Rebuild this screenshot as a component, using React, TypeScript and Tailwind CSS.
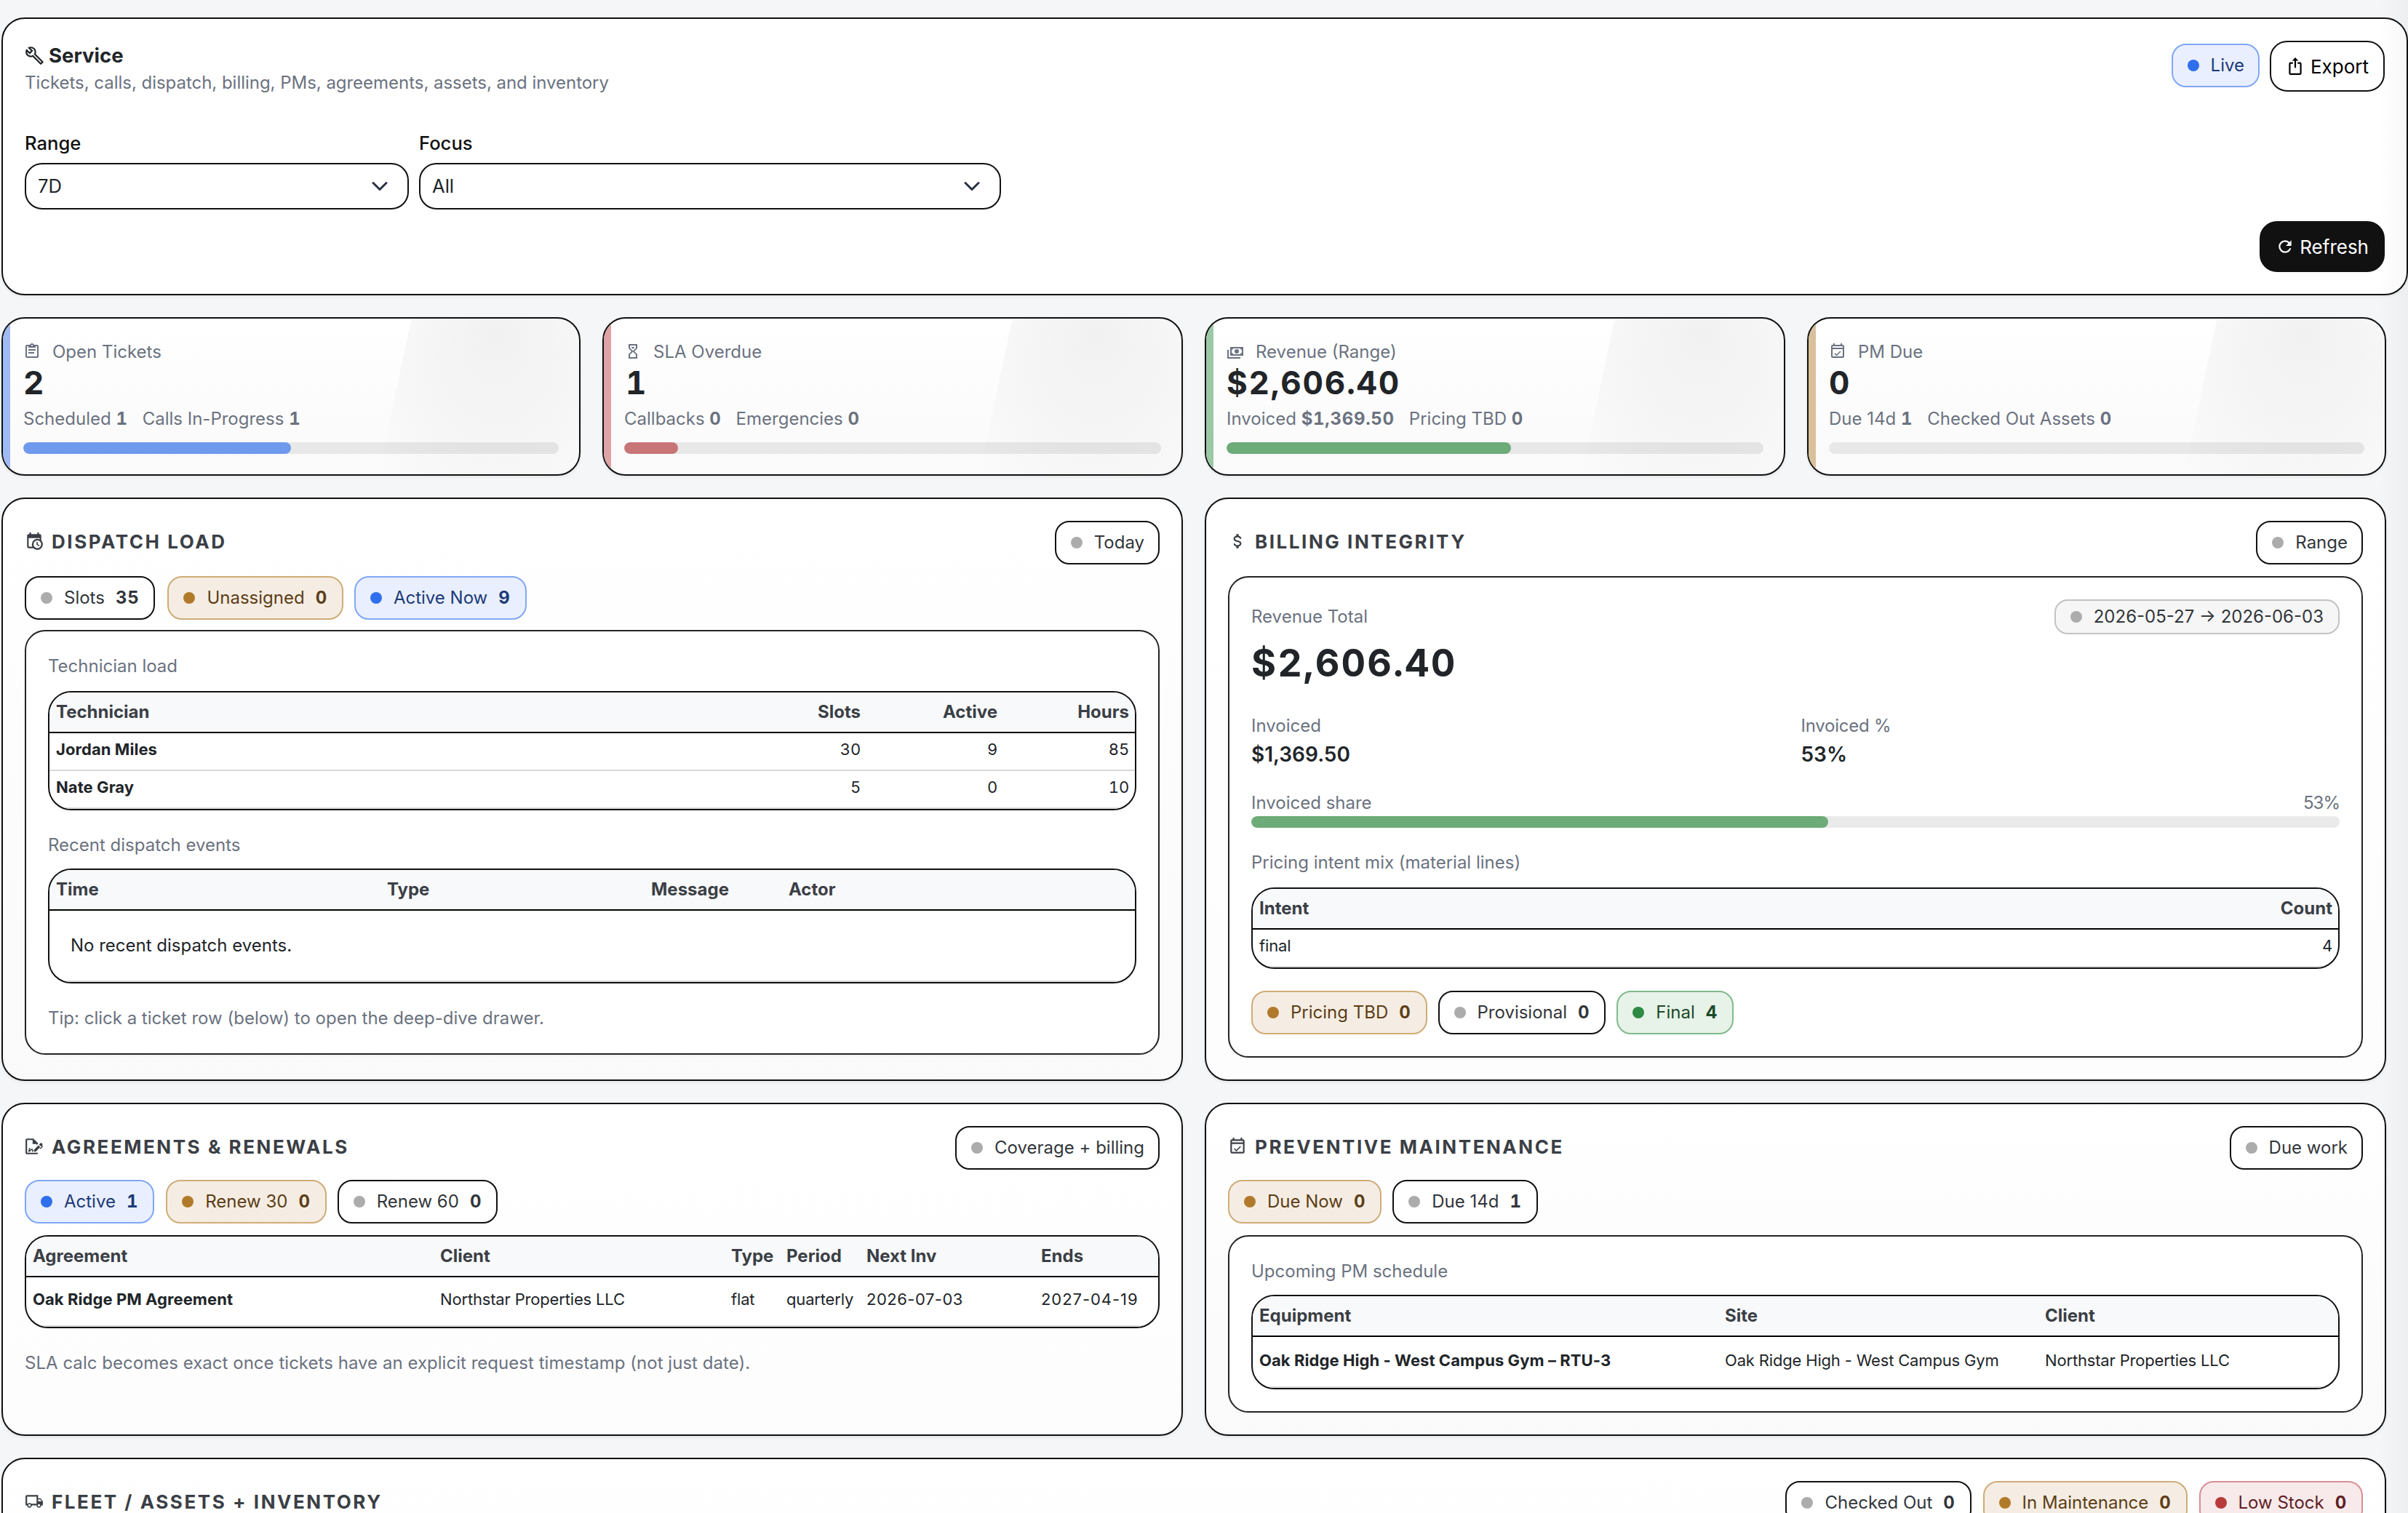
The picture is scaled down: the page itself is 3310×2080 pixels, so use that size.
import React from 'react';
import { clsx } from 'clsx';

const ICONS = {
  wrench:
    'M22.61,19L13.53,9.91C14.46,7.57 14,4.81 12.09,2.91C9.79,0.61 6.21,0.4 3.66,2.26L7.5,6.11L6.08,7.52L2.25,3.69C0.39,6.23 0.6,9.82 2.9,12.11C4.76,13.97 7.47,14.46 9.79,13.59L18.9,22.7C19.29,23.09 19.92,23.09 20.31,22.7L22.61,20.4C23,20 23,19.39 22.61,19M19.61,20.59L10.15,11.13C9.54,11.58 8.86,11.85 8.15,11.95C6.79,12.15 5.36,11.74 4.32,10.7C3.37,9.76 2.93,8.5 3,7.26L6.09,10.35L10.33,6.11L7.24,3C8.48,2.95 9.73,3.39 10.68,4.33C11.76,5.41 12.17,6.9 11.92,8.29C11.8,9 11.5,9.66 11.04,10.25L20.5,19.7L19.61,20.59Z',
  exportUp:
    'M12,1L8,5H11V14H13V5H16M18,23H6C4.89,23 4,22.1 4,21V9A2,2 0 0,1 6,7H9V9H6V21H18V9H15V7H18A2,2 0 0,1 20,9V21A2,2 0 0,1 18,23Z',
  refresh:
    'M17.65,6.35C16.2,4.9 14.21,4 12,4A8,8 0 0,0 4,12A8,8 0 0,0 12,20C15.73,20 18.84,17.45 19.73,14H17.65C16.83,16.33 14.61,18 12,18A6,6 0 0,1 6,12A6,6 0 0,1 12,6C13.66,6 15.14,6.69 16.22,7.78L13,11H20V4L17.65,6.35Z',
  clipboard:
    'M19,3H14.82C14.4,1.84 13.3,1 12,1C10.7,1 9.6,1.84 9.18,3H5A2,2 0 0,0 3,5V19A2,2 0 0,0 5,21H19A2,2 0 0,0 21,19V5A2,2 0 0,0 19,3M12,3A1,1 0 0,1 13,4A1,1 0 0,1 12,5A1,1 0 0,1 11,4A1,1 0 0,1 12,3M7,7H17V5H19V19H5V5H7V7M17,11H7V9H17V11M15,15H7V13H15V15Z',
  sand:
    'M6,2H18V8H18V8L14,12L18,16V16H18V22H6V16H6V16L10,12L6,8V8H6V2M16,16.5L12,12.5L8,16.5V20H16V16.5M12,11.5L16,7.5V4H8V7.5L12,11.5M10,6H14V6.75L12,8.75L10,6.75V6Z',
  cash: 'M5,6H23V18H5V6M14,9A3,3 0 0,1 17,12A3,3 0 0,1 14,15A3,3 0 0,1 11,12A3,3 0 0,1 14,9M9,8A2,2 0 0,1 7,10V14A2,2 0 0,1 9,16H19A2,2 0 0,1 21,14V10A2,2 0 0,1 19,8H9M1,10H3V20H19V22H1V10Z',
  calendarCheck:
    'M19 3H18V1H16V3H8V1H6V3H5C3.9 3 3 3.9 3 5V19C3 20.11 3.9 21 5 21H19C20.11 21 21 20.11 21 19V5C21 3.9 20.11 3 19 3M19 19H5V9H19V19M19 7H5V5H19V7M10.56 18.46L16.5 12.53L15.43 11.47L10.56 16.34L8.45 14.23L7.39 15.29L10.56 18.46Z',
  calendarClock:
    'M15,13H16.5V15.82L18.94,17.23L18.19,18.53L15,16.69V13M19,8H5V19H9.67C9.24,18.09 9,17.07 9,16A7,7 0 0,1 16,9C17.07,9 18.09,9.24 19,9.67V8M5,21C3.89,21 3,20.1 3,19V5C3,3.89 3.89,3 5,3H6V1H8V3H16V1H18V3H19A2,2 0 0,1 21,5V11.1C22.24,12.36 23,14.09 23,16A7,7 0 0,1 16,23C14.09,23 12.36,22.24 11.1,21H5M16,11.15A4.85,4.85 0 0,0 11.15,16C11.15,18.68 13.32,20.85 16,20.85A4.85,4.85 0 0,0 20.85,16C20.85,13.32 18.68,11.15 16,11.15Z',
  dollar:
    'M7,15H9C9,16.08 10.37,17 12,17C13.63,17 15,16.08 15,15C15,13.9 13.96,13.5 11.76,12.97C9.64,12.44 7,11.78 7,9C7,7.21 8.47,5.69 10.5,5.18V3H13.5V5.18C15.53,5.69 17,7.21 17,9H15C15,7.92 13.63,7 12,7C10.37,7 9,7.92 9,9C9,10.1 10.04,10.5 12.24,11.03C14.36,11.56 17,12.22 17,15C17,16.79 15.53,18.31 13.5,18.82V21H10.5V18.82C8.47,18.31 7,16.79 7,15Z',
  fileSign:
    'M19.7 12.9L14 18.6H11.7V16.3L17.4 10.6L19.7 12.9M23.1 12.1C23.1 12.4 22.8 12.7 22.5 13L20 15.5L19.1 14.6L21.7 12L21.1 11.4L20.4 12.1L18.1 9.8L20.3 7.7C20.5 7.5 20.9 7.5 21.2 7.7L22.6 9.1C22.8 9.3 22.8 9.7 22.6 10C22.4 10.2 22.2 10.4 22.2 10.6C22.2 10.8 22.4 11 22.6 11.2C22.9 11.5 23.2 11.8 23.1 12.1M3 20V4H10V9H15V10.5L17 8.5V8L11 2H3C1.9 2 1 2.9 1 4V20C1 21.1 1.9 22 3 22H15C16.1 22 17 21.1 17 20H3M11 17.1C10.8 17.1 10.6 17.2 10.5 17.2L10 15H8.5L6.4 16.7L7 14H5.5L4.5 19H6L8.9 16.4L9.5 18.7H10.5L11 18.6V17.1Z',
  truck:
    'M18 18.5C18.83 18.5 19.5 17.83 19.5 17C19.5 16.17 18.83 15.5 18 15.5C17.17 15.5 16.5 16.17 16.5 17C16.5 17.83 17.17 18.5 18 18.5M19.5 9.5H17V12H21.46L19.5 9.5M6 18.5C6.83 18.5 7.5 17.83 7.5 17C7.5 16.17 6.83 15.5 6 15.5C5.17 15.5 4.5 16.17 4.5 17C4.5 17.83 5.17 18.5 6 18.5M20 8L23 12V17H21C21 18.66 19.66 20 18 20C16.34 20 15 18.66 15 17H9C9 18.66 7.66 20 6 20C4.34 20 3 18.66 3 17H1V6C1 4.89 1.89 4 3 4H17V8H20M3 6V15H3.76C4.31 14.39 5.11 14 6 14C6.89 14 7.69 14.39 8.24 15H15V6H3Z',
};
type IconName = keyof typeof ICONS;

function Icon({ name, className }: { name: IconName; className?: string }) {
  return (
    <svg viewBox="0 0 24 24" fill="currentColor" className={clsx('shrink-0', className)}>
      <path d={ICONS[name]} />
    </svg>
  );
}

type Tone = 'plain' | 'blue' | 'amber' | 'green' | 'red';

const PILL: Record<Tone, string> = {
  plain: 'border-[#111111] bg-white text-[#32363b]',
  blue: 'border-[#80a7f5] bg-[#e9effe] text-[#1c3a78]',
  amber: 'border-[#cfac78] bg-[#f5ede3] text-[#5c3d16]',
  green: 'border-[#7fba8b] bg-[#e7f2e9] text-[#1b4a27]',
  red: 'border-[#d98f92] bg-[#f8eaeb] text-[#5e1f23]',
};
const DOT: Record<Tone, string> = {
  plain: 'bg-[#acacac]',
  blue: 'bg-[#2f6fed]',
  amber: 'bg-[#b17a2b]',
  green: 'bg-[#2c8a42]',
  red: 'bg-[#b83a3a]',
};

function Pill({ tone = 'plain', label, count, className }: { tone?: Tone; label: string; count?: string; className?: string }) {
  return (
    <span
      className={clsx(
        'inline-flex h-[60px] shrink-0 items-center gap-4 whitespace-nowrap rounded-[20px] border-2 px-5 text-[24px] leading-9',
        PILL[tone],
        className,
      )}
    >
      <span className={clsx('size-4 rounded-full', DOT[tone])} />
      <span className="-mr-px">{label}</span>
      {count !== undefined && <b className="font-bold tracking-[0.03em] tabular-nums">{count}</b>}
    </span>
  );
}

function Select({ value, className }: { value: string; className?: string }) {
  return (
    <div
      className={clsx(
        'flex h-16 items-center justify-between rounded-[24px] border-2 border-[#111111] bg-white pl-4 pr-[26px] text-[25.6px] text-[#212529]',
        className,
      )}
    >
      <span>{value}</span>
      <svg viewBox="0 0 16 16" className="size-6 text-[#2b3445]" fill="none" stroke="currentColor" strokeWidth="2" strokeLinecap="round" strokeLinejoin="round">
        <path d="m2 5 6 6 6-6" />
      </svg>
    </div>
  );
}

interface KpiProps {
  icon: IconName;
  label: string;
  value: string;
  stats: [string, string][];
  pct: number;
  stripe: string;
  fill: string;
  valueClass?: string;
}

function Kpi({ icon, label, value, stats, pct, stripe, fill, valueClass }: KpiProps) {
  return (
    <section className="relative h-[218px] overflow-hidden rounded-[32px] border-2 border-[#111111] bg-linear-to-b from-white to-[#fafafa] p-7 shadow-[0_2px_4px_rgba(0,0,0,0.07)]">
      <div className={clsx('absolute inset-y-0 left-0 w-2.5', stripe)} />
      <div className="absolute -top-[99px] left-[534px] h-[500px] w-[400px] rotate-12 bg-[radial-gradient(circle_at_118px_130px,rgba(17,17,17,0.06),rgba(17,17,17,0)_250px)]" />
      <div className="relative text-[24px] leading-9 text-[#6b7280]">
        <div className="flex items-center gap-4">
          <Icon name={icon} className="-mt-0.5 size-6" />
          <span>{label}</span>
        </div>
        <div className={clsx('h-[49px] text-[44px] leading-[49px] font-bold tracking-[0.04em] text-[#212529] tabular-nums', valueClass)}>{value}</div>
        <div className="mt-[7px] flex gap-5">
          {stats.map(([name, n]) => (
            <span key={name}>
              {name} <b className="font-bold tracking-[0.03em] tabular-nums">{n}</b>
            </span>
          ))}
        </div>
        <div className="mt-3.5 h-4 overflow-hidden rounded-full bg-[#111111]/8">
          <div className={clsx('h-full rounded-full', fill)} style={{ width: `${pct}%` }} />
        </div>
      </div>
    </section>
  );
}

interface PanelProps {
  icon: IconName;
  title: string;
  actions: React.ReactNode;
  className?: string;
  children?: React.ReactNode;
}

function Panel({ icon, title, actions, className = 'to-[#fafafa]', children }: PanelProps) {
  return (
    <section
      className={clsx(
        'rounded-[32px] border-2 border-[#111111] bg-linear-to-b from-white p-[30px] shadow-[0_2px_4px_rgba(0,0,0,0.07)]',
        className,
      )}
    >
      <header className="flex items-center justify-between">
        <h2 className="-mt-[3px] flex items-center gap-[11px] text-[26px] leading-10 font-bold tracking-[0.098em] text-[#3b3f45] uppercase">
          <Icon name={icon} className="-mt-0.5 size-[26px]" />
          {title}
        </h2>
        <div className="flex gap-4">{actions}</div>
      </header>
      {children}
    </section>
  );
}

function Inset({ className, children }: { className?: string; children: React.ReactNode }) {
  return (
    <div className={clsx('rounded-[28px] border-2 border-[#242424] bg-white p-[30px] text-[24px] leading-9 text-[#6b7280] shadow-[0_2px_2px_rgba(0,0,0,0.04)]', className)}>
      {children}
    </div>
  );
}

interface GridTableProps {
  cols: string;
  head: string[];
  rows?: string[][];
  right?: number[];
  rowClass?: string;
  className?: string;
  boldFirst?: boolean;
  empty?: string;
}

function cellTracking(text: string) {
  if (!/^\d{4}-\d\d-\d\d$/.test(text)) return 'tracking-[-0.17px]';
  return text.includes('1') ? 'tracking-[0.95px]' : 'tracking-[0.5px]';
}

function GridTable({ cols, head, rows = [], right = [], rowClass = 'h-[52px] pb-1.5', className, boldFirst = true, empty }: GridTableProps) {
  return (
    <div className={clsx('overflow-hidden rounded-[32px] border-2 border-[#111111] bg-white text-[#212529]', className)}>
      <div className={clsx('grid h-14 items-center border-b-2 border-black bg-[#f8f9fb] pb-px text-[24px] font-bold text-[#3b3f45]', cols)}>
        {head.map((h, i) => (
          <span key={h} className={clsx('pr-2 pl-[9px] whitespace-nowrap', right.includes(i) && 'text-right')}>
            {h}
          </span>
        ))}
      </div>
      {rows.map((r) => (
        <div key={r[0]} className={clsx('grid items-center border-b-2 border-[#d9d9d9] text-[22px]', cols, rowClass)}>
          {r.map((c, i) => (
            <span
              key={i}
              className={clsx(
                'pr-2 pl-[9px] whitespace-nowrap',
                right.includes(i) && 'text-right tabular-nums',
                i === 0 && boldFirst ? 'font-bold tracking-[0.07px]' : cellTracking(c),
              )}
            >
              {c}
            </span>
          ))}
        </div>
      ))}
      {empty && <div className="border-b-2 border-[#d9d9d9] px-[29px] py-[30px] text-[24px] leading-9">{empty}</div>}
    </div>
  );
}

export default function App() {
  return (
    <div className="relative h-screen overflow-hidden bg-[#f4f6f8] pt-6 pl-0.5 font-['Inter',sans-serif] text-[#212529]">
      <section className="h-[382px] rounded-[32px] border-2 border-[#111111] bg-white p-[30px] shadow-[0_2px_4px_rgba(0,0,0,0.07)]">
        <div className="flex h-[122px] items-start justify-between">
          <div>
            <h1 className="-mb-px flex h-[41px] items-center gap-1.5 text-[27.5px] font-bold">
              <Icon name="wrench" className="size-[27px]" />
              Service
            </h1>
            <p className="text-[24px] leading-9 tracking-[-0.03px] text-[#6b7280]">Tickets, calls, dispatch, billing, PMs, agreements, assets, and inventory</p>
          </div>
          <div className="flex items-start gap-3.5">
            <Pill tone="blue" label="Live" className="mt-1" />
            <button className="flex h-[70px] items-center gap-2 rounded-[24px] border-2 border-[#111111] bg-white px-5 text-[26px] text-black">
              <Icon name="exportUp" className="size-[26px]" />
              Export
            </button>
          </div>
        </div>
        <div className="flex gap-3.5">
          <label className="flex w-[528px] flex-col text-[25.6px] font-medium text-[#111111]">
            <span className="h-[46px] leading-[38px]">Range</span>
            <Select value="7D" className="font-normal" />
          </label>
          <label className="flex w-[800px] flex-col text-[25.6px] font-medium text-[#111111]">
            <span className="h-[46px] leading-[38px]">Focus</span>
            <Select value="All" className="font-normal" />
          </label>
        </div>
        <div className="mt-4 flex justify-end">
          <button className="flex h-[70px] items-center gap-[7px] rounded-[24px] border-2 border-[#111111] bg-[#111111] px-5 text-[26px] text-white">
            <Icon name="refresh" className="size-[26px]" />
            Refresh
          </button>
        </div>
      </section>

      <main className="mt-[30px] flex w-[3278px] flex-col gap-[30px]">
        <div className="grid grid-cols-[796px_798px_798px_796px] gap-[30px]">
          <Kpi icon="clipboard" label="Open Tickets" value="2" stats={[['Scheduled', '1'], ['Calls In-Progress', '1']]} pct={50} stripe="bg-[#9fbaf4]" fill="bg-[#6f99ec]" />
          <Kpi icon="sand" label="SLA Overdue" value="1" valueClass="pl-0.5" stats={[['Callbacks', '0'], ['Emergencies', '0']]} pct={10} stripe="bg-[#dfa2a5]" fill="bg-[#c87578]" />
          <Kpi icon="cash" label="Revenue (Range)" value="$2,606.40" stats={[['Invoiced', '$1,369.50'], ['Pricing TBD', '0']]} pct={53} stripe="bg-[#9bc9a5]" fill="bg-[#6dab79]" />
          <Kpi icon="calendarCheck" label="PM Due" value="0" stats={[['Due 14d', '1'], ['Checked Out Assets', '0']]} pct={0} stripe="bg-[#d9c09a]" fill="bg-[#b17a2b]" />
        </div>

        <div className="grid h-[802px] grid-cols-2 gap-[30px]">
          <Panel icon="calendarClock" title="Dispatch Load" actions={<Pill label="Today" />}>
            <div className="mt-4 flex gap-[15px]">
              <Pill label="Slots" count="35" className="mr-0.5" />
              <Pill tone="amber" label="Unassigned" count="0" />
              <Pill tone="blue" label="Active Now" count="9" />
            </div>
            <Inset className="mt-3.5">
              <div>Technician load</div>
              <GridTable
                className="mt-4"
                cols="grid-cols-[935px_188px_188px_181px]"
                head={['Technician', 'Slots', 'Active', 'Hours']}
                right={[1, 2, 3]}
                rows={[
                  ['Jordan Miles', '30', '9', '85'],
                  ['Nate Gray', '5', '0', '10'],
                ]}
              />
              <div className="mt-[30px]">Recent dispatch events</div>
              <GridTable className="mt-3.5" cols="grid-cols-[455px_363px_189px_1fr]" head={['Time', 'Type', 'Message', 'Actor']} empty="No recent dispatch events." />
              <div className="mt-[30px]">Tip: click a ticket row (below) to open the deep-dive drawer.</div>
            </Inset>
          </Panel>

          <Panel icon="dollar" title="Billing Integrity" className="to-[#fdfdfd]" actions={<Pill label="Range" />}>
            <Inset className="mt-4">
              <div className="flex h-12 items-center justify-between">
                <span>Revenue Total</span>
                <span className="flex h-12 items-center gap-4 rounded-[18px] border-2 border-[#c3c3c3] bg-[#f6f6f6] px-5 text-[#32363b]">
                  <span className="size-4 rounded-full bg-[#acacac]" />
                  2026-05-27 → 2026-06-03
                </span>
              </div>
              <div className="h-[78px] text-[52px] leading-[80px] font-bold tracking-[0.04em] text-[#212529] tabular-nums">$2,606.40</div>
              <div className="mt-[30px] grid grid-cols-2 gap-[15px]">
                <div>
                  <div>Invoiced</div>
                  <div className="text-[28px] leading-[42px] font-semibold text-[#212529]">$1,369.50</div>
                </div>
                <div>
                  <div className="tracking-[-0.01em]">Invoiced %</div>
                  <div className="text-[28px] leading-[42px] font-semibold text-[#212529]">53%</div>
                </div>
              </div>
              <div className="mt-7 flex justify-between">
                <span>Invoiced share</span>
                <span className="tracking-[-0.04em]">53%</span>
              </div>
              <div className="h-4 overflow-hidden rounded-full bg-[#111111]/9">
                <div className="h-full w-[53%] rounded-full bg-[#6dab79]" />
              </div>
              <div className="mt-[30px]">Pricing intent mix (material lines)</div>
              <GridTable className="mt-4" cols="grid-cols-2" head={['Intent', 'Count']} right={[1]} rows={[['final', '4']]} boldFirst={false} />
              <div className="mt-[30px] flex gap-[15px]">
                <Pill tone="amber" label="Pricing TBD" count="0" />
                <Pill label="Provisional" count="0" />
                <Pill tone="green" label="Final" count="4" />
              </div>
            </Inset>
          </Panel>
        </div>

        <div className="grid h-[458px] grid-cols-2 gap-[30px]">
          <Panel icon="fileSign" title="Agreements & Renewals" className="to-[#fdfdfd]" actions={<Pill label="Coverage + billing" />}>
            <div className="mt-3.5 flex gap-[15px]">
              <Pill tone="blue" label="Active" count="1" className="mr-px" />
              <Pill tone="amber" label="Renew 30" count="0" />
              <Pill label="Renew 60" count="0" />
            </div>
            <GridTable
              className="mt-4"
              cols="grid-cols-[560px_400px_76px_110px_240px_1fr]"
              head={['Agreement', 'Client', 'Type', 'Period', 'Next Inv', 'Ends']}
              rows={[['Oak Ridge PM Agreement', 'Northstar Properties LLC', 'flat', 'quarterly', '2026-07-03', '2027-04-19']]}
              rowClass="h-[68px] pb-[5px]"
            />
            <p className="mt-[30px] text-[24px] leading-9 tracking-[0.03px] text-[#6b7280]">SLA calc becomes exact once tickets have an explicit request timestamp (not just date).</p>
          </Panel>

          <Panel icon="calendarCheck" title="Preventive Maintenance" actions={<Pill label="Due work" />}>
            <div className="mt-3.5 flex gap-[15px]">
              <Pill tone="amber" label="Due Now" count="0" />
              <Pill label="Due 14d" count="1" />
            </div>
            <Inset className="mt-4">
              <div>Upcoming PM schedule</div>
              <GridTable
                className="mt-3.5"
                cols="grid-cols-[640px_440px_1fr]"
                head={['Equipment', 'Site', 'Client']}
                rows={[['Oak Ridge High - West Campus Gym – RTU-3', 'Oak Ridge High - West Campus Gym', 'Northstar Properties LLC']]}
                rowClass="h-[70px] pb-[4px]"
              />
            </Inset>
          </Panel>
        </div>

        <Panel
          icon="truck"
          title="Fleet / Assets + Inventory"
          className="h-[400px] shrink-0 to-[#fafafa]"
          actions={
            <>
              <Pill label="Checked Out" count="0" />
              <Pill tone="amber" label="In Maintenance" count="0" />
              <Pill tone="red" label="Low Stock" count="0" />
            </>
          }
        />
      </main>
      <div className="pointer-events-none absolute inset-y-0 right-0 w-10 bg-linear-to-r from-black/0 to-black/3" />
    </div>
  );
}
